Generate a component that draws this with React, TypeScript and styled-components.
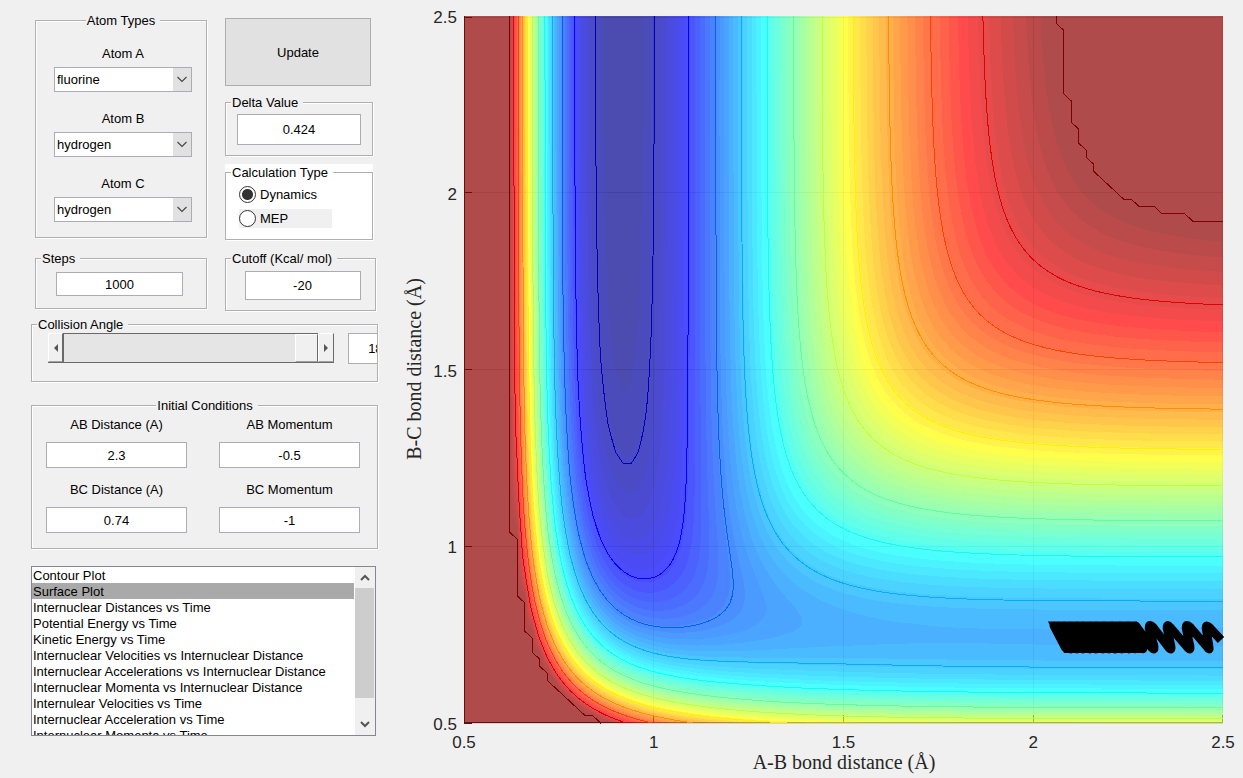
import React, { useId, useMemo, useState } from "react";
import styled, { createGlobalStyle, css } from "styled-components";

/* ---------- potential energy surface ---------- */

type Bond = { depth: number; beta: number; re: number };
type Point = [number, number];

const HF: Bond = { depth: 141.2, beta: 2.212, re: 0.9168 };
const HH: Bond = { depth: 109.4, beta: 1.946, re: 0.7415 };
const SATO = 0.186;

const MIN_R = 0.5;
const MAX_R = 2.5;
const CELLS = 100;
const CEILING = -22.25;
const COLOR_MAX = -20.3;
const LINE_STEP = 10.43;
const LINE_COUNT = 12;
const COLORS = 64;

function integrals(bond: Bond, r: number): Point {
  const e = Math.exp(-bond.beta * (r - bond.re));
  const bonding = bond.depth * (e * e - 2 * e) * (1 + SATO);
  const antibonding = 0.5 * bond.depth * (e * e + 2 * e) * (1 - SATO);
  return [(bonding + antibonding) / 2, (bonding - antibonding) / 2];
}

function potential(ab: number, bc: number) {
  const [q1, j1] = integrals(HF, ab);
  const [q2, j2] = integrals(HH, bc);
  const [q3, j3] = integrals(HF, ab + bc);
  const exchange = Math.sqrt(((j1 - j2) ** 2 + (j2 - j3) ** 2 + (j3 - j1) ** 2) / 2);
  return (q1 + q2 + q3 - exchange) / (1 + SATO);
}

const STEP = (MAX_R - MIN_R) / CELLS;
const GRID = Array.from({ length: CELLS + 1 }, (_, j) =>
  Array.from({ length: CELLS + 1 }, (_, i) =>
    Math.min(CEILING, potential(MIN_R + i * STEP, MIN_R + j * STEP)),
  ),
);
const FLOOR = Math.min(...GRID.flat());

/* ---------- plot geometry ---------- */

const PLOT = { left: 64, right: 823, top: 16, bottom: 723 };
const px = (i: number) => PLOT.left + (i / CELLS) * (PLOT.right - PLOT.left);
const py = (j: number) => PLOT.bottom - (j / CELLS) * (PLOT.bottom - PLOT.top);
const fmt = (p: Point) => `${px(p[0]).toFixed(2)} ${py(p[1]).toFixed(2)}`;

function jet(index: number) {
  const ramp = (k: number) => {
    if (k < 1 || k > 47) return 0;
    if (k <= 16) return k / 16;
    return k < 32 ? 1 : (48 - k) / 16;
  };
  const channel = (k: number) => Math.round(255 * ramp(k));
  return `rgb(${channel(index - 24)}, ${channel(index - 8)}, ${channel(index + 8)})`;
}

function colorAt(value: number) {
  const t = Math.floor(((value - FLOOR) / (COLOR_MAX - FLOOR)) * COLORS);
  return jet(Math.max(1, Math.min(COLORS, t + 1)));
}

const CORNERS: Point[] = [[0, 0], [1, 0], [1, 1], [0, 1]];

function crossing(i: number, j: number, side: number, level: number): Point {
  let a = CORNERS[side];
  let b = CORNERS[(side + 1) % 4];
  if (side > 1) [a, b] = [b, a];
  const va = GRID[j + a[1]][i + a[0]];
  const vb = GRID[j + b[1]][i + b[0]];
  const t = (level - va) / (vb - va);
  return [i + a[0] + (b[0] - a[0]) * t, j + a[1] + (b[1] - a[1]) * t];
}

/** Area in which the surface lies above the level. */
function areaAbove(level: number) {
  const parts: string[] = [];
  for (let j = 0; j < CELLS; j++) {
    let start = -1;
    for (let i = 0; i <= CELLS; i++) {
      const above = i < CELLS ? CORNERS.map(([x, y]) => GRID[j + y][i + x] >= level) : [];
      const full = above.length > 0 && above.every(Boolean);
      if (full) {
        if (start < 0) start = i;
        continue;
      }
      if (start >= 0) {
        parts.push(`M${fmt([start, j])}L${fmt([i, j])}L${fmt([i, j + 1])}L${fmt([start, j + 1])}Z`);
        start = -1;
      }
      if (!above.some(Boolean)) continue;
      const shape: Point[] = [];
      CORNERS.forEach(([x, y], side) => {
        if (above[side]) shape.push([i + x, j + y]);
        if (above[side] !== above[(side + 1) % 4]) shape.push(crossing(i, j, side, level));
      });
      parts.push(`M${shape.map(fmt).join("L")}Z`);
    }
  }
  return parts.join("");
}

/** Contour line at the level, with its segments joined into polylines. */
function contour(level: number) {
  const points = new Map<string, Point>();
  const links = new Map<string, string[]>();
  const edgeId = (i: number, j: number, side: number) =>
    [`h${i},${j}`, `v${i + 1},${j}`, `h${i},${j + 1}`, `v${i},${j}`][side];

  for (let j = 0; j < CELLS; j++) {
    for (let i = 0; i < CELLS; i++) {
      const above = CORNERS.map(([x, y]) => GRID[j + y][i + x] >= level);
      const ids: string[] = [];
      for (let side = 0; side < 4; side++) {
        if (above[side] === above[(side + 1) % 4]) continue;
        const id = edgeId(i, j, side);
        points.set(id, crossing(i, j, side, level));
        ids.push(id);
      }
      for (let k = 0; k + 1 < ids.length; k += 2) {
        links.set(ids[k], [...(links.get(ids[k]) ?? []), ids[k + 1]]);
        links.set(ids[k + 1], [...(links.get(ids[k + 1]) ?? []), ids[k]]);
      }
    }
  }

  const seen = new Set<string>();
  const ordered = [...links.keys()].sort((a, b) => links.get(a)!.length - links.get(b)!.length);
  let path = "";
  for (const first of ordered) {
    if (seen.has(first)) continue;
    const chain: Point[] = [];
    let current: string | undefined = first;
    while (current) {
      seen.add(current);
      chain.push(points.get(current)!);
      current = links.get(current)!.find((id) => !seen.has(id));
    }
    path += `M${chain.map(fmt).join("L")}`;
  }
  return path;
}

/** Vibrating trajectory: slow drift at the left, wide swings at the right. */
const TRAJECTORY =
  "M821 640L809 627Q806 624 806 628L809 646Q810 651 808 648L790 627Q786 623 786 628L790 646Q791 651 788 648L770 627Q767 623 767 628L771 646Q772 651 769 648L753 627Q749 623 749 628L754 646Q755 651 752 648L736 626L743 649L728 626L735 649L720 626L729 649L712 626L722 649L704 626L715 649L696 626L709 649L690 626L703 649L683 626L696 649L677 626L690 649L670 626L683 649L664 626L677 649L658 626L671 649L654 626L666 649";

const TICKS = [
  { label: "0.5", at: 0 },
  { label: "1", at: 25 },
  { label: "1.5", at: 50 },
  { label: "2", at: 75 },
  { label: "2.5", at: 100 },
];

/* ---------- styles ---------- */

const INK = "#000";
const FACE = "#f0f0f0";
const EDGE = "#abadb3";

const GlobalStyle = createGlobalStyle`
  *, *::before, *::after { box-sizing: border-box; }
  body {
    margin: 0;
    background: ${FACE};
    color: ${INK};
    font: 13px/16px "Liberation Sans", Arial, sans-serif;
  }
  button, input, select { font: inherit; color: inherit; margin: 0; }
`;

const Page = styled.main`
  display: flex;
  align-items: flex-start;
  overflow: hidden;
`;

const Sidebar = styled.form`
  flex: 0 0 400px;
  padding: 12px 0 0 31px;
`;

const Settings = styled.div`
  display: grid;
  grid-template-columns: 172px 151px;
  gap: 10px 18px;
  align-items: start;
  padding-left: 4px;
`;

const RunColumn = styled.div`
  display: flex;
  flex-direction: column;
  gap: 8px;
  width: 148px;
  padding-top: 6px;
`;

const Panel = styled.fieldset<{ $pad: string; $gap?: number }>`
  display: flex;
  flex-direction: column;
  align-items: center;
  gap: ${(p) => p.$gap ?? 0}px;
  min-width: 0;
  margin: 0;
  padding: ${(p) => p.$pad};
  border: 1px solid #b0b0b0;
  box-shadow: 1px 1px 0 #fff, inset 1px 1px 0 #fff;
`;

const Title = styled.legend<{ $center?: boolean; $white?: boolean }>`
  margin-left: ${(p) => (p.$center ? "auto" : "5px")};
  margin-right: auto;
  padding: 1px 5px 0 1px;
  line-height: 16px;
  background: ${(p) => (p.$white ? "#fff" : FACE)};
`;

const White = styled.div`
  background: #fff;
`;

const Inset = styled.div`
  padding-left: 4px;
  line-height: 0;
`;

const UpdateButton = styled.button`
  width: 146px;
  height: 68px;
  padding: 2px 0 0;
  border: 1px solid #adadad;
  background: #e1e1e1;
`;

const Field = styled.div<{ $gap: number }>`
  display: flex;
  flex-direction: column;
  align-items: center;
  gap: ${(p) => p.$gap}px;
`;

const TextBox = styled.input<{ $w: number; $h: number }>`
  flex: none;
  width: ${(p) => p.$w}px;
  height: ${(p) => p.$h}px;
  padding: 0;
  border: 1px solid ${EDGE};
  border-radius: 0;
  background: #fff;
  line-height: 16px;
  text-align: center;
`;

const Picker = styled.div`
  position: relative;
  width: 138px;
  height: 25px;
`;

const PickerSelect = styled.select`
  appearance: none;
  width: 100%;
  height: 100%;
  padding: 0 20px 0 2px;
  border: 1px solid ${EDGE};
  border-radius: 0;
  background: linear-gradient(#e1e1e1, #e1e1e1) right / 18px 100% no-repeat #fff;
`;

const PickerArrow = styled.svg`
  position: absolute;
  top: 9px;
  right: 5px;
  pointer-events: none;
`;

const Choices = styled.div`
  display: flex;
  flex-direction: column;
  gap: 5px;
  align-self: stretch;
  padding-left: 13px;
`;

const Choice = styled.label<{ $shaded?: boolean }>`
  display: flex;
  align-items: center;
  gap: 4px;
  width: 93px;
  height: 19px;
  background: ${(p) => (p.$shaded ? FACE : "#fff")};
`;

const Radio = styled.input`
  appearance: none;
  width: 17px;
  height: 17px;
  border: 1px solid #333;
  border-radius: 50%;
  background: #fff;
  &:checked {
    background: radial-gradient(circle, #333 5px, #fff 6px);
  }
`;

const AngleRow = styled.div`
  display: flex;
  align-self: stretch;
  overflow: hidden;
  padding-left: 16px;
`;

const SliderFrame = styled.div`
  display: flex;
  flex: none;
  width: 286px;
  height: 30px;
  margin-right: 14px;
  border-bottom: 1px solid #696969;
`;

const StepButton = styled.button<{ $end?: boolean }>`
  display: flex;
  align-items: center;
  justify-content: center;
  width: ${(p) => (p.$end ? 16 : 15)}px;
  padding: 0;
  border: 1px solid;
  border-color: #fff #696969 #a0a0a0 #fff;
  background: ${FACE};
`;

const thumb = css`
  width: 23px;
  height: 28px;
  border: 1px solid;
  border-color: #fff #696969 #a0a0a0 #fff;
  border-radius: 0;
  background: ${FACE};
`;

const Slider = styled.input`
  appearance: none;
  flex: 1;
  min-width: 0;
  height: 29px;
  border-top: 1px solid #696969;
  border-left: 1px solid #696969;
  background: #e5e5e5;
  &::-webkit-slider-thumb {
    appearance: none;
    ${thumb}
  }
  &::-moz-range-thumb {
    ${thumb}
  }
`;

const Conditions = styled.div`
  display: grid;
  grid-template-columns: 141px 141px;
  gap: 14px 32px;
  align-self: flex-start;
  padding-left: 9px;
`;

const Stack = styled.div`
  display: flex;
  flex-direction: column;
  gap: 15px;
  width: 347px;
  margin-top: 5px;
`;

const ListFrame = styled.div`
  display: flex;
  width: 345px;
  height: 170px;
  margin-top: 17px;
  border: 1px solid #828790;
  background: #fff;
`;

const List = styled.select`
  flex: 1;
  min-width: 0;
  height: 100%;
  padding: 0;
  border: 0;
  outline: 0;
  border-radius: 0;
  background: #fff;
  overflow: hidden;
  scrollbar-width: none;
  &::-webkit-scrollbar {
    display: none;
  }
  option {
    height: 16px;
    min-height: 16px;
    padding: 1px 1px 0;
    line-height: 15px;
    color: ${INK};
  }
  option:checked {
    background: linear-gradient(#a9a9a9, #a9a9a9);
    color: ${INK};
  }
`;

const ScrollBar = styled.div`
  display: flex;
  flex-direction: column;
  width: 20px;
  margin-left: 1px;
  padding-right: 1px;
  background: ${FACE};
`;

const ScrollButton = styled.button`
  display: flex;
  align-items: center;
  justify-content: center;
  height: 21px;
  padding: 0;
  border: 0;
  background: ${FACE};
`;

const ScrollThumb = styled.div`
  height: 110px;
  margin-bottom: auto;
  background: #cdcdcd;
`;

const Figure = styled.figure`
  flex: 1;
  min-width: 0;
  margin: 0;
`;

const Chart = styled.svg`
  display: block;
  width: 100%;
  height: auto;
`;

const TickText = styled.text`
  font: 17px "Liberation Sans", Arial, sans-serif;
  fill: #262626;
`;

const AxisText = styled.text`
  font: 20px "Liberation Serif", "Times New Roman", serif;
  fill: #262626;
  text-anchor: middle;
`;

/* ---------- components ---------- */

function AtomPicker({ label, initial }: { label: string; initial: string }) {
  const id = useId();
  return (
    <Field $gap={5}>
      <label htmlFor={id}>{label}</label>
      <Picker>
        <PickerSelect id={id} defaultValue={initial}>
          <option>fluorine</option>
          <option>hydrogen</option>
        </PickerSelect>
        <PickerArrow width="10" height="7" viewBox="0 0 10 7" aria-hidden="true">
          <path d="M.5 1L5 5.5L9.5 1" fill="none" stroke="#444" strokeWidth="1.1" />
        </PickerArrow>
      </Picker>
    </Field>
  );
}

function ConditionBox({ label, initial }: { label: string; initial: string }) {
  const id = useId();
  return (
    <Field $gap={9}>
      <label htmlFor={id}>{label}</label>
      <TextBox id={id} defaultValue={initial} $w={141} $h={26} />
    </Field>
  );
}

const PLOT_KINDS = [
  "Contour Plot",
  "Surface Plot",
  "Internuclear Distances vs Time",
  "Potential Energy vs Time",
  "Kinetic Energy vs Time",
  "Internuclear Velocities vs Internuclear Distance",
  "Internuclear Accelerations vs Internuclear Distance",
  "Internuclear Momenta vs Internuclear Distance",
  "Internulear Velocities vs Time",
  "Internuclear Acceleration vs Time",
  "Internuclear Momenta vs Time",
];

function SurfacePlot() {
  const bands = useMemo(
    () =>
      Array.from({ length: COLORS - 1 }, (_, k) => ({
        color: jet(k + 2),
        path: areaAbove(FLOOR + ((k + 1) * (COLOR_MAX - FLOOR)) / COLORS),
      })),
    [],
  );
  const lines = useMemo(
    () =>
      Array.from({ length: LINE_COUNT }, (_, k) => {
        const level = CEILING - k * LINE_STEP;
        return { color: k === 0 ? jet(COLORS) : colorAt(level), path: contour(level - 0.0001) };
      }),
    [],
  );
  const { left, right, top, bottom } = PLOT;

  return (
    <Figure>
      <Chart viewBox="0 0 843 778" role="img" aria-label="Potential energy surface">
        <g shapeRendering="crispEdges">
          <rect x={left} y={top} width={right - left} height={bottom - top} fill="#fff" />
          {TICKS.map(({ at }) => (
            <path
              key={at}
              d={`M${Math.min(px(at), right - 1)} ${top}V${bottom}M${left} ${Math.max(py(at), top + 1)}H${right}`}
              stroke="#262626"
              strokeOpacity="0.15"
            />
          ))}
          <path d={`M${left + 0.5} ${top}V${bottom - 0.5}H${right}`} fill="none" stroke="#262626" />
          {TICKS.map(({ at }) => (
            <path
              key={at}
              d={`M${Math.min(px(at), right - 1)} ${bottom}v-8M${left} ${Math.max(py(at), top + 1)}h8`}
              stroke="#262626"
            />
          ))}
          <g opacity="0.7">
            <rect x={left} y={top} width={right - left} height={bottom - top} fill={jet(1)} />
            {bands.map((band) => (
              <path key={band.color} d={band.path} fill={band.color} />
            ))}
          </g>
          {lines.map((line, k) => (
            <path key={k} d={line.path} fill="none" stroke={line.color} />
          ))}
        </g>
        <path d={TRAJECTORY} fill="none" stroke="#000" strokeWidth="8.6" strokeLinejoin="round" />
        <path d="M648 621.5H737L745 653H664Z" fill="#000" />
        {TICKS.map(({ label, at }) => (
          <g key={at}>
            <TickText x={px(at)} y={748} textAnchor="middle">{label}</TickText>
            <TickText x={57} y={py(at) + 7} textAnchor="end">{label}</TickText>
          </g>
        ))}
        <AxisText x={444} y={769}>A-B bond distance (Å)</AxisText>
        <AxisText transform="translate(21 369) rotate(-90)">B-C bond distance (Å)</AxisText>
      </Chart>
    </Figure>
  );
}

export default function App() {
  const [angle, setAngle] = useState(180);
  const [mode, setMode] = useState("Dynamics");

  return (
    <>
      <GlobalStyle />
      <Page>
        <Sidebar onSubmit={(e) => e.preventDefault()}>
          <Settings>
            <Panel $pad="17px 0 15px 4px" $gap={19}>
              <Title $center>Atom Types</Title>
              <AtomPicker label="Atom A" initial="fluorine" />
              <AtomPicker label="Atom B" initial="hydrogen" />
              <AtomPicker label="Atom C" initial="hydrogen" />
            </Panel>
            <RunColumn>
              <UpdateButton type="submit">Update</UpdateButton>
              <Panel $pad="3px 0 10px">
                <Title>Delta Value</Title>
                <TextBox aria-label="Delta Value" defaultValue="0.424" $w={124} $h={31} />
              </Panel>
              <White>
                <Panel $pad="4px 0 11px">
                  <Title $white>Calculation Type</Title>
                  <Choices>
                    {["Dynamics", "MEP"].map((name) => (
                      <Choice key={name} $shaded={name === "MEP"}>
                        <Radio
                          type="radio"
                          name="mode"
                          checked={mode === name}
                          onChange={() => setMode(name)}
                        />
                        {name}
                      </Choice>
                    ))}
                  </Choices>
                </Panel>
              </White>
            </RunColumn>
            <Panel $pad="5px 3px 12px 0">
              <Title>Steps</Title>
              <TextBox aria-label="Steps" defaultValue="1000" $w={127} $h={24} />
            </Panel>
            <Panel $pad="4px 0 10px">
              <Title>Cutoff (Kcal/ mol)</Title>
              <Inset>
                <TextBox aria-label="Cutoff (Kcal/ mol)" defaultValue="-20" $w={116} $h={29} />
              </Inset>
            </Panel>
          </Settings>

          <Stack>
            <Panel $pad="0 0 17px">
              <Title>Collision Angle</Title>
              <AngleRow>
                <SliderFrame>
                  <StepButton type="button" aria-label="Decrease angle" onClick={() => setAngle(Math.max(0, angle - 1))}>
                    <svg width="4" height="8" viewBox="0 0 4 8"><path d="M4 0V8L0 4Z" fill="#555" /></svg>
                  </StepButton>
                  <Slider
                    type="range"
                    aria-label="Collision Angle"
                    min={0}
                    max={180}
                    value={angle}
                    onChange={(e) => setAngle(Number(e.target.value))}
                  />
                  <StepButton $end type="button" aria-label="Increase angle" onClick={() => setAngle(Math.min(180, angle + 1))}>
                    <svg width="4" height="8" viewBox="0 0 4 8"><path d="M0 0V8L4 4Z" fill="#555" /></svg>
                  </StepButton>
                </SliderFrame>
                <TextBox aria-label="Collision Angle value" value={angle} readOnly $w={62} $h={31} />
              </AngleRow>
            </Panel>

            <Panel $pad="3px 0 15px 5px">
              <Title $center>Initial Conditions</Title>
              <Conditions>
                <ConditionBox label="AB Distance (A)" initial="2.3" />
                <ConditionBox label="AB Momentum" initial="-0.5" />
                <ConditionBox label="BC Distance (A)" initial="0.74" />
                <ConditionBox label="BC Momentum" initial="-1" />
              </Conditions>
            </Panel>
          </Stack>

          <ListFrame>
            <List size={10} aria-label="Plot type" defaultValue="Surface Plot">
              {PLOT_KINDS.map((kind) => (
                <option key={kind}>{kind}</option>
              ))}
            </List>
            <ScrollBar>
              <ScrollButton type="button" aria-label="Scroll up">
                <svg width="10" height="7" viewBox="0 0 10 7"><path d="M1 6L5 2L9 6" fill="none" stroke="#555" strokeWidth="2" /></svg>
              </ScrollButton>
              <ScrollThumb />
              <ScrollButton type="button" aria-label="Scroll down">
                <svg width="10" height="7" viewBox="0 0 10 7"><path d="M1 1L5 5L9 1" fill="none" stroke="#555" strokeWidth="2" /></svg>
              </ScrollButton>
            </ScrollBar>
          </ListFrame>
        </Sidebar>
        <SurfacePlot />
      </Page>
    </>
  );
}
